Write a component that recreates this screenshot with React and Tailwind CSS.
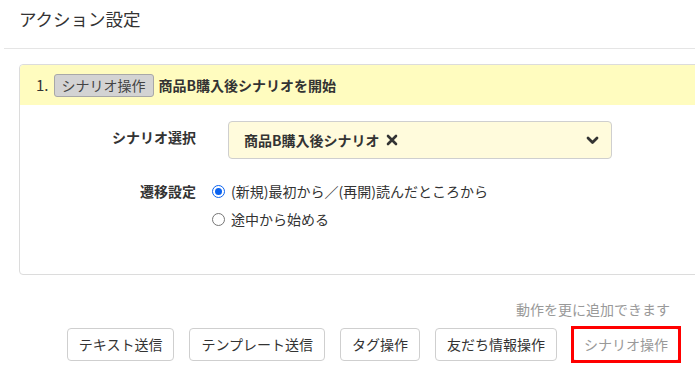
import React from 'react';

const buttons = ['テキスト送信', 'テンプレート送信', 'タグ操作', '友だち情報操作'];

function App() {
  return (
    <div className="w-[695px] h-[369px] overflow-hidden bg-white text-[#333] font-['Noto_Sans_CJK_JP','Noto_Sans',sans-serif]">
      <h1 className="pl-[19px] pt-[6px] h-[48px] text-[17.5px] leading-[26px] text-[#333]">アクション設定</h1>
      <div className="ml-[4px] border-t border-[#e5e5e5]" />

      {/* action card */}
      <div className="ml-[19px] mr-[-12px] mt-[15px] h-[211px] border border-[#dcdcdc] rounded-[4px]">
        <div className="h-[40px] bg-[#fffcbf] rounded-t-[4px] flex items-center pl-[16px] gap-[5px] text-[14px]">
          <span className="text-[15px]">1.</span>
          <span className="h-[23px] px-[7px] flex items-center bg-[#d3d3d3] border border-[#a8a8a8] rounded-[3px] text-[#444]">シナリオ操作</span>
          <span className="font-bold">商品B購入後シナリオを開始</span>
        </div>

        <div className="pt-[16px] text-[14px]">
          <div className="flex">
            <div className="w-[176px] text-right font-bold pt-[5px] leading-[22px]">シナリオ選択</div>
            <div className="ml-[32px] w-[384px] h-[38px] bg-[#fffbdc] border border-[#cfcfcf] rounded-[4px] flex items-center justify-between pl-[15px] pr-[12px]">
              <span className="font-bold flex items-center gap-[6px]">
                商品B購入後シナリオ
                <svg width="12" height="12" viewBox="0 0 12 12"><path d="M2 2 L10 10 M10 2 L2 10" stroke="#333" strokeWidth="2.6" strokeLinecap="round" /></svg>
              </span>
              <svg width="13" height="9" viewBox="0 0 13 9"><path d="M2 2 L6.5 6.5 L11 2" fill="none" stroke="#333" strokeWidth="2.8" strokeLinecap="round" strokeLinejoin="round" /></svg>
            </div>
          </div>

          <div className="flex mt-[21px]">
            <div className="w-[176px] text-right font-bold leading-[22px]">遷移設定</div>
            <div className="ml-[16px] flex flex-col gap-[6px]">
              <label className="flex items-center gap-[6px] leading-[22px]">
                <span className="w-[13px] h-[13px] rounded-full border border-[#0b63f0] flex items-center justify-center">
                  <span className="w-[7px] h-[7px] rounded-full bg-[#0b63f0]" />
                </span>
                (新規)最初から／(再開)読んだところから
              </label>
              <label className="flex items-center gap-[6px] leading-[22px]">
                <span className="w-[13px] h-[13px] rounded-full border border-[#767676]" />
                途中から始める
              </label>
            </div>
          </div>
        </div>
      </div>

      <div className="mt-[24px] pr-[25px] text-right text-[14px] text-[#999] leading-[20px]">動作を更に追加できます</div>

      <div className="mt-[9px] pr-[15px] flex justify-end gap-[15px] text-[14px]">
        {buttons.map((b) => (
          <button key={b} className="h-[33px] px-[11px] border border-[#cfcfcf] rounded-[4px] bg-white text-[#333]">{b}</button>
        ))}
        <div className="relative">
          <button className="h-[33px] px-[11px] border border-[#cfcfcf] rounded-[4px] bg-white text-[#999]">シナリオ操作</button>
          <div className="absolute inset-x-[-1px] inset-y-[-2px] border-[3px] border-[#ff0000]" />
        </div>
      </div>
    </div>
  );
}

export default App;
